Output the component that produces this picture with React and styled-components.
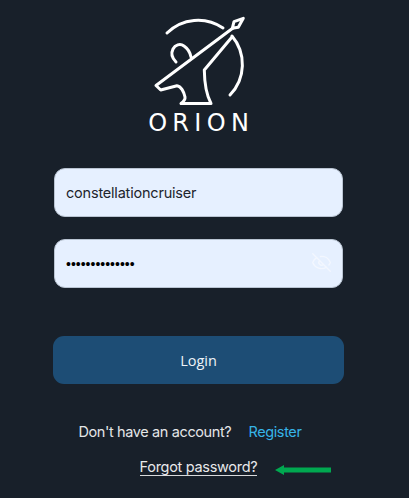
import React from "react";
import styled, { createGlobalStyle } from "styled-components";
import { EyeOff } from "lucide-react";

const Global = createGlobalStyle`
  html, body { margin: 0; padding: 0; height: 100%; background: #18202a; }
  #root { height: 100%; }
`;

const Page = styled.main`
  box-sizing: border-box;
  width: 409px;
  height: 498px;
  overflow: hidden;
  padding: 15px 12px 0 0;
  display: flex;
  flex-direction: column;
  align-items: center;
  background: #18202a;
  font-family: "Inter", "Liberation Sans", sans-serif;
`;

const LogoMark = styled.svg`
  display: block;
  width: 100px;
  height: 90px;
  flex: none;
  fill: none;
  stroke: #fff;
  stroke-width: 3;
  stroke-linecap: round;
  stroke-linejoin: round;
`;

const Wordmark = styled.div`
  margin-top: 4px;
  height: 28px;
  line-height: 28px;
  font-family: "DejaVu Sans", sans-serif;
  font-size: 24px;
  font-weight: 400;
  letter-spacing: 5.3px;
  margin-right: -5.3px;
  color: #fff;
`;

const Form = styled.form`
  margin: 31px 0 0;
  display: flex;
  flex-direction: column;
  align-items: center;
`;

const Field = styled.div`
  position: relative;
  width: 289px;
  height: 49px;
  margin-bottom: 22px;
`;

const Input = styled.input`
  box-sizing: border-box;
  width: 100%;
  height: 100%;
  padding: 0 11px;
  border: 1px solid #b9c4d2;
  border-radius: 11px;
  background: #e6f0ff;
  color: #1d242c;
  font-family: "Inter", sans-serif;
  font-size: 14.5px;
  letter-spacing: -0.2px;
  outline: none;

  &[type="password"] {
    font-family: "Liberation Sans", sans-serif;
    font-size: 14px;
    letter-spacing: 0;
    color: #000;
  }
`;

const Eye = styled.span`
  position: absolute;
  right: 11px;
  top: 13px;
  display: flex;
  color: #f3f7ff;
`;

const Login = styled.button`
  width: 291px;
  height: 48px;
  margin-top: 26px;
  border: none;
  border-radius: 11px;
  background: #1d4d75;
  color: #eef3f8;
  font-family: "Open Sans", sans-serif;
  font-size: 14.5px;
`;

const SignupRow = styled.p`
  margin: 38px 17px 0 0;
  height: 19px;
  line-height: 19px;
  display: flex;
  gap: 17px;
  font-size: 14.5px;
  letter-spacing: -0.38px;
  color: #e4e6e8;
`;

const RegisterLink = styled.a`
  color: #36b4e8;
`;

const ForgotWrap = styled.div`
  position: relative;
  margin-top: 17px;
`;

const ForgotLink = styled.a`
  display: block;
  font-size: 14.5px;
  line-height: 17px;
  letter-spacing: -0.3px;
  color: #e8e9ea;
  border-bottom: 1px solid #d8dadc;
`;

const Arrow = styled.svg`
  position: absolute;
  left: 135px;
  top: 6px;
  width: 56px;
  height: 12px;
`;

export default function App() {
  return (
    <Page>
      <Global />
      <LogoMark viewBox="150 15 100 90" aria-label="Orion logo">
        <path d="M168 33A44 44 0 0 1 224 28" />
        <path d="M233 36A44 44 0 0 1 231 95" />
        <path d="M244.3 18.3L235 21.7L233.3 28.3L239.3 27.3Z" />
        <path d="M234 28L157 85.5L161.7 90L178 85.7C182 86 185 92 186 97C186.5 100 184 102 182 103.5H212C208 96 205.5 86 205.3 70L233 37" />
        <path d="M177 62C173 58 172 53 174 49C176 45 181 43 185 46C188 48 191 52 192 57" />
      </LogoMark>
      <Wordmark>ORION</Wordmark>
      <Form>
        <Field>
          <Input type="text" value="constellationcruiser" readOnly />
        </Field>
        <Field>
          <Input type="password" value="constellation1" readOnly />
          <Eye>
            <EyeOff size={21} strokeWidth={1.6} />
          </Eye>
        </Field>
        <Login type="button">Login</Login>
      </Form>
      <SignupRow>
        <span>Don't have an account?</span>
        <RegisterLink>Register</RegisterLink>
      </SignupRow>
      <ForgotWrap>
        <ForgotLink>Forgot password?</ForgotLink>
        <Arrow viewBox="0 0 56 12">
          <path d="M0 6L9 1V3.5H56V8.5H9V11Z" fill="#00a850" />
        </Arrow>
      </ForgotWrap>
    </Page>
  );
}
